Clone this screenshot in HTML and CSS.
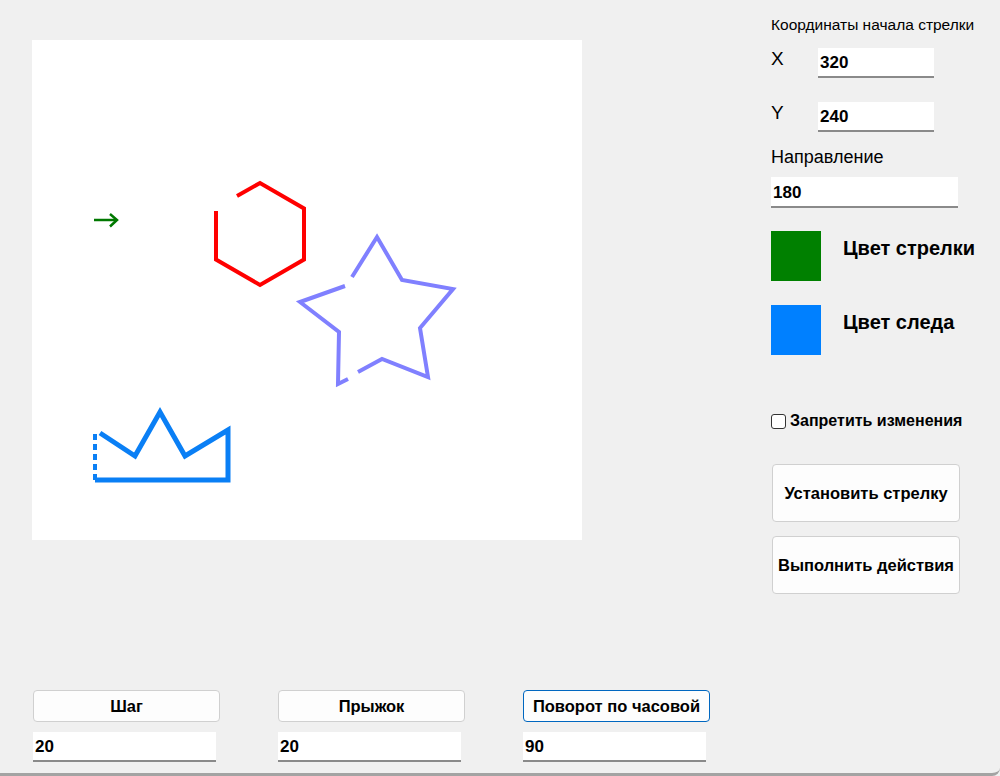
FILE: index.html
```html
<!DOCTYPE html>
<html lang="ru">
<head>
<meta charset="utf-8">
<title>Стрелка</title>
<link rel="stylesheet" href="styles.css">
</head>
<body>
<div class="app">
  <div class="left">
    <div class="canvas">
      <svg width="550" height="500" viewBox="0 0 550 500" xmlns="http://www.w3.org/2000/svg">
        <g fill="none" stroke-linejoin="miter" stroke-linecap="butt">
          <polyline points="205,156 228,143 272,168.5 272,219.5 228,245 184,219.5 184,171" stroke="#ff0000" stroke-width="4"/>
          <polyline points="320,237 345,197 370,240 421,249 388,288 396,337 350,319 326,332" stroke="#8080ff" stroke-width="4"/>
          <polyline points="316,339 306,344 307,292 268,262 313,246" stroke="#8080ff" stroke-width="4"/>
          <polyline points="68,393 103,416 128,372 153,416 196,390 196,440 63,440" stroke="#0a7ff5" stroke-width="5"/>
          <line x1="63" y1="440" x2="63" y2="390" stroke="#0a7ff5" stroke-width="4" stroke-dasharray="6 4"/>
          <line x1="62" y1="180" x2="84" y2="180" stroke="#007800" stroke-width="2.5"/>
          <polyline points="78,174 85,180 78,186.5" stroke="#007800" stroke-width="2.5"/>
        </g>
      </svg>
    </div>
    <div class="controls">
      <div class="group">
        <button class="btn">Шаг</button>
        <input class="field" type="text" value="20">
      </div>
      <div class="group">
        <button class="btn">Прыжок</button>
        <input class="field" type="text" value="20">
      </div>
      <div class="group">
        <button class="btn focused">Поворот по часовой</button>
        <input class="field" type="text" value="90">
      </div>
    </div>
  </div>
  <div class="right">
    <div class="title">Координаты начала стрелки</div>
    <div class="coord">
      <span class="axis">X</span>
      <input class="field small" type="text" value="320">
    </div>
    <div class="coord second">
      <span class="axis">Y</span>
      <input class="field small" type="text" value="240">
    </div>
    <div class="dir-label">Направление</div>
    <input class="field dir" type="text" value="180">
    <div class="color-row first-color">
      <span class="swatch green"></span>
      <span class="color-label">Цвет стрелки</span>
    </div>
    <div class="color-row">
      <span class="swatch blue"></span>
      <span class="color-label">Цвет следа</span>
    </div>
    <label class="check">
      <span class="box"></span>
      <span>Запретить изменения</span>
    </label>
    <button class="btn big">Установить стрелку</button>
    <button class="btn big">Выполнить действия</button>
  </div>
</div>
</body>
</html>
```

FILE: styles.css
```css
* { box-sizing: border-box; }
html, body { margin: 0; padding: 0; }
body {
  background: #f0f0f0;
  font-family: "Liberation Sans", Arial, sans-serif;
  color: #000;
  width: 1000px;
  height: 776px;
  overflow: hidden;
}
.app {
  width: 1000px;
  height: 776px;
  display: flex;
  border-bottom: 3px solid #a3a3a3;
  border-bottom-right-radius: 8px;
}
.left {
  width: 739px;
  padding: 40px 0 0 32px;
}
.canvas {
  width: 550px;
  height: 500px;
  background: #fff;
}
.canvas svg { display: block; }
.controls {
  display: flex;
  margin-top: 150px;
  margin-left: 1px;
  gap: 58px;
}
.group {
  width: 187px;
  display: flex;
  flex-direction: column;
}
.btn {
  font-family: "Liberation Sans", Arial, sans-serif;
  font-weight: bold;
  font-size: 16.5px;
  color: #000;
  background: #fdfdfd;
  border: 1px solid #d0d0d0;
  border-radius: 4px;
  padding: 0;
  height: 32px;
  width: 187px;
}
.btn.focused { border: 1px solid #0067c0; }
.field {
  font-family: "Liberation Sans", Arial, sans-serif;
  font-weight: bold;
  font-size: 17px;
  color: #000;
  background: #fff;
  border: none;
  border-bottom: 2px solid #8a8a8a;
  height: 30px;
  width: 183px;
  padding: 2px 0 0 2px;
  margin-top: 10px;
  outline: none;
}
.right {
  width: 261px;
  padding: 16px 0 0 32px;
  display: flex;
  flex-direction: column;
  align-items: flex-start;
}
.title {
  font-size: 15.5px;
  line-height: 18px;
}
.coord {
  display: flex;
  align-items: flex-start;
  margin-top: 14px;
}
.coord.second { margin-top: 24px; }
.axis {
  font-size: 19px;
  line-height: 22px;
  width: 47px;
}
.field.small {
  width: 116px;
  margin-top: 0;
}
.dir-label {
  font-size: 18px;
  line-height: 22px;
  margin-top: 14px;
}
.field.dir {
  width: 187px;
  height: 31px;
  margin-top: 9px;
}
.color-row {
  display: flex;
  align-items: flex-start;
  margin-top: 24px;
}
.color-row.first-color { margin-top: 23px; }
.swatch {
  width: 50px;
  height: 50px;
  display: block;
}
.swatch.green { background: #008000; }
.swatch.blue { background: #0080ff; }
.color-label {
  font-weight: bold;
  font-size: 20px;
  line-height: 24px;
  margin-left: 22px;
  margin-top: 5px;
}
.check {
  display: flex;
  align-items: center;
  margin-top: 57px;
  font-weight: bold;
  font-size: 16px;
  line-height: 18px;
}
.box {
  width: 15px;
  height: 15px;
  border: 1px solid #333;
  border-radius: 3px;
  background: #fff;
  margin-right: 4px;
  display: block;
}
.btn.big {
  width: 188px;
  height: 58px;
  margin-top: 14px;
  margin-left: 1px;
}
.check + .btn.big { margin-top: 34px; }
```
